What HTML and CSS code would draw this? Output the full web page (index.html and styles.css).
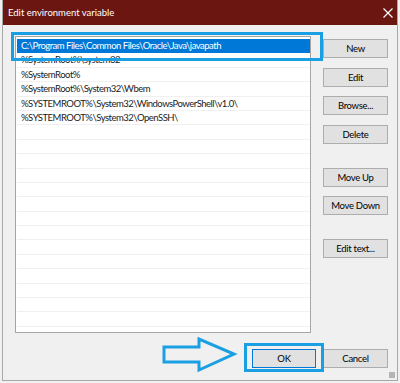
FILE: index.html
```html
<!DOCTYPE html>
<html lang="en">
<head>
  <meta charset="UTF-8">
  <title>Edit environment variable</title>
  <link rel="stylesheet" href="styles.css">
</head>
<body>
  <div class="window">
    <div class="titlebar">
      <span class="title">Edit environment variable</span>
      <svg class="close" width="10" height="10" viewBox="0 0 10 10">
        <path d="M0.5 0.5 L9.5 9.5 M9.5 0.5 L0.5 9.5" stroke="#ffffff" stroke-width="1.2" fill="none"/>
      </svg>
    </div>

    <div class="content">
      <div class="main">
        <div class="list">
          <div class="row selected">C:\Program Files\Common Files\Oracle\Java\javapath</div>
          <div class="row">%SystemRoot%\system32</div>
          <div class="row">%SystemRoot%</div>
          <div class="row">%SystemRoot%\System32\Wbem</div>
          <div class="row">%SYSTEMROOT%\System32\WindowsPowerShell\v1.0\</div>
          <div class="row">%SYSTEMROOT%\System32\OpenSSH\</div>
          <div class="row"></div>
          <div class="row"></div>
          <div class="row"></div>
          <div class="row"></div>
          <div class="row"></div>
          <div class="row"></div>
          <div class="row"></div>
          <div class="row"></div>
          <div class="row"></div>
          <div class="row"></div>
          <div class="row"></div>
          <div class="row"></div>
          <div class="row"></div>
          <div class="row"></div>
          <div class="row"></div>
        </div>

        <div class="side-buttons">
          <button class="btn">New</button>
          <button class="btn">Edit</button>
          <button class="btn">Browse...</button>
          <button class="btn">Delete</button>
          <button class="btn group-start">Move Up</button>
          <button class="btn">Move Down</button>
          <button class="btn group-start">Edit text...</button>
        </div>
      </div>

      <div class="footer">
        <button class="btn ok">OK</button>
        <button class="btn">Cancel</button>
      </div>
    </div>

    <span class="grip"></span>

    <!-- annotation overlays -->
    <div class="mark mark-path"></div>
    <div class="mark mark-ok"></div>
    <svg class="arrow" width="76" height="38" viewBox="0 0 76 38">
      <path d="M2 10 L37 10 L37 2 L72 17 L37 33 L37 25 L2 25 Z" fill="none" stroke="#1aa0e2" stroke-width="3" stroke-linejoin="miter"/>
    </svg>
  </div>
</body>
</html>
```

FILE: styles.css
```css
* {
  margin: 0;
  padding: 0;
  box-sizing: border-box;
}

body {
  font-family: Lato, "Noto Sans", sans-serif;
  font-size: 9.5px;
  color: #000000;
  background-color: #f0f0f0;
  width: 400px;
  height: 383px;
  overflow: hidden;
}

.window {
  position: relative;
  margin-left: 2px;
  width: 396px;
  height: 381px;
  background-color: #f0f0f0;
  border: 1px solid #a8a8a8;
  border-top: none;
}

.titlebar {
  display: flex;
  justify-content: space-between;
  align-items: center;
  height: 25px;
  padding: 0 4px 0 5px;
  background-color: #6b1611;
  color: #ffffff;
  font-size: 9.5px;
}

.content {
  padding: 11px 9px 0 12px;
}

.main {
  display: flex;
  gap: 12px;
}

.list {
  width: 296px;
  height: 297px;
  border: 1px solid #a5a5a5;
  background-color: #ffffff;
  padding: 2px 0 0 1px;
  overflow: hidden;
}

.row {
  height: 14.4px;
  line-height: 14px;
  padding-left: 4px;
  border-bottom: 1px solid #f0f0f0;
  white-space: nowrap;
  letter-spacing: -0.5px;
  color: #1a1a1a;
}

.row.selected {
  background-color: #0078d7;
  color: #ffffff;
  border-bottom-color: #0078d7;
}

.side-buttons {
  display: flex;
  flex-direction: column;
  gap: 9.5px;
  padding-top: 3px;
}

.btn {
  width: 65px;
  height: 19px;
  font-family: inherit;
  font-size: 9.5px;
  letter-spacing: -0.3px;
  color: #000000;
  background-color: #e1e1e1;
  border: 1px solid #adadad;
}

.side-buttons .group-start {
  margin-top: 14.5px;
}

.footer {
  display: flex;
  justify-content: flex-end;
  gap: 7px;
  padding-top: 16px;
}

.btn.ok {
  width: 64px;
  border: 1px solid #0078d7;
  box-shadow: inset 0 0 0 1px #e1e1e1;
}

.grip {
  position: absolute;
  right: 2px;
  bottom: 2px;
  width: 6px;
  height: 6px;
  background-image: radial-gradient(circle, #b5b5b5 0.8px, transparent 1px);
  background-size: 2px 2px;
}

.mark {
  position: absolute;
  border: 3px solid #1aa0e2;
}

.mark-path {
  left: 8px;
  top: 32px;
  width: 312px;
  height: 29px;
}

.mark-ok {
  left: 241px;
  top: 343px;
  width: 80px;
  height: 29px;
}

.arrow {
  position: absolute;
  left: 159px;
  top: 337px;
}
```
